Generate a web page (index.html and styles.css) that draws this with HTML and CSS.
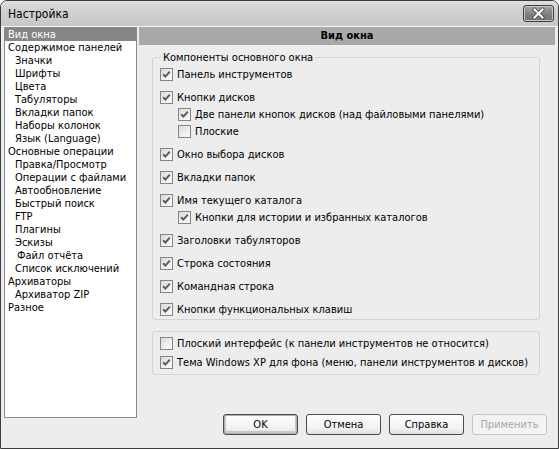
FILE: index.html
```html
<!DOCTYPE html>
<html lang="ru">
<head>
<meta charset="utf-8">
<title>Настройка</title>
<link rel="stylesheet" href="styles.css">
</head>
<body>
<div class="window">
  <div class="titlebar">
    <span class="title">Настройка</span>
    <span class="close">
      <svg width="29" height="15" viewBox="0 0 29 15"><path d="M10.5 3.5 L18.5 11.5 M18.5 3.5 L10.5 11.5" stroke="#4a4a4a" stroke-width="3.6" stroke-linecap="square"/><path d="M10.5 3.5 L18.5 11.5 M18.5 3.5 L10.5 11.5" stroke="#ffffff" stroke-width="2" stroke-linecap="square"/></svg>
    </span>
  </div>
  <div class="body">
    <ul class="tree">
      <li class="sel">Вид окна</li>
      <li>Содержимое панелей</li>
      <li class="l1">Значки</li>
      <li class="l1">Шрифты</li>
      <li class="l1">Цвета</li>
      <li class="l1">Табуляторы</li>
      <li class="l1">Вкладки папок</li>
      <li class="l1">Наборы колонок</li>
      <li class="l1">Язык (Language)</li>
      <li>Основные операции</li>
      <li class="l1">Правка/Просмотр</li>
      <li class="l1">Операции с файлами</li>
      <li class="l1">Автообновление</li>
      <li class="l1">Быстрый поиск</li>
      <li class="l1">FTP</li>
      <li class="l1">Плагины</li>
      <li class="l1">Эскизы</li>
      <li class="l1 extra">Файл отчёта</li>
      <li class="l1">Список исключений</li>
      <li>Архиваторы</li>
      <li class="l1">Архиватор ZIP</li>
      <li>Разное</li>
    </ul>
    <div class="main">
      <div class="header">Вид окна</div>
      <div class="group g1">
        <div class="legend">Компоненты основного окна</div>
        <div class="row first"><span class="cb on"><svg viewBox="0 0 11 11"><path d="M2.2 5.2 L4.4 7.6 L8.8 2.6" fill="none" stroke="#5c5c5c" stroke-width="2"/></svg></span>Панель инструментов</div>
        <div class="row"><span class="cb on"><svg viewBox="0 0 11 11"><path d="M2.2 5.2 L4.4 7.6 L8.8 2.6" fill="none" stroke="#5c5c5c" stroke-width="2"/></svg></span>Кнопки дисков</div>
        <div class="row sub"><span class="cb on"><svg viewBox="0 0 11 11"><path d="M2.2 5.2 L4.4 7.6 L8.8 2.6" fill="none" stroke="#5c5c5c" stroke-width="2"/></svg></span>Две панели кнопок дисков (над файловыми панелями)</div>
        <div class="row sub"><span class="cb"></span>Плоские</div>
        <div class="row"><span class="cb on"><svg viewBox="0 0 11 11"><path d="M2.2 5.2 L4.4 7.6 L8.8 2.6" fill="none" stroke="#5c5c5c" stroke-width="2"/></svg></span>Окно выбора дисков</div>
        <div class="row"><span class="cb on"><svg viewBox="0 0 11 11"><path d="M2.2 5.2 L4.4 7.6 L8.8 2.6" fill="none" stroke="#5c5c5c" stroke-width="2"/></svg></span>Вкладки папок</div>
        <div class="row"><span class="cb on"><svg viewBox="0 0 11 11"><path d="M2.2 5.2 L4.4 7.6 L8.8 2.6" fill="none" stroke="#5c5c5c" stroke-width="2"/></svg></span>Имя текущего каталога</div>
        <div class="row sub"><span class="cb on"><svg viewBox="0 0 11 11"><path d="M2.2 5.2 L4.4 7.6 L8.8 2.6" fill="none" stroke="#5c5c5c" stroke-width="2"/></svg></span>Кнопки для истории и избранных каталогов</div>
        <div class="row"><span class="cb on"><svg viewBox="0 0 11 11"><path d="M2.2 5.2 L4.4 7.6 L8.8 2.6" fill="none" stroke="#5c5c5c" stroke-width="2"/></svg></span>Заголовки табуляторов</div>
        <div class="row"><span class="cb on"><svg viewBox="0 0 11 11"><path d="M2.2 5.2 L4.4 7.6 L8.8 2.6" fill="none" stroke="#5c5c5c" stroke-width="2"/></svg></span>Строка состояния</div>
        <div class="row"><span class="cb on"><svg viewBox="0 0 11 11"><path d="M2.2 5.2 L4.4 7.6 L8.8 2.6" fill="none" stroke="#5c5c5c" stroke-width="2"/></svg></span>Командная строка</div>
        <div class="row"><span class="cb on"><svg viewBox="0 0 11 11"><path d="M2.2 5.2 L4.4 7.6 L8.8 2.6" fill="none" stroke="#5c5c5c" stroke-width="2"/></svg></span>Кнопки функциональных клавиш</div>
      </div>
      <div class="group g2">
        <div class="row first2"><span class="cb"></span>Плоский интерфейс (к панели инструментов не относится)</div>
        <div class="row second2"><span class="cb on"><svg viewBox="0 0 11 11"><path d="M2.2 5.2 L4.4 7.6 L8.8 2.6" fill="none" stroke="#5c5c5c" stroke-width="2"/></svg></span>Тема Windows XP для фона (меню, панели инструментов и дисков)</div>
      </div>
      <div class="buttons">
        <span class="btn default">OK</span>
        <span class="btn">Отмена</span>
        <span class="btn">Справка</span>
        <span class="btn disabled">Применить</span>
      </div>
    </div>
  </div>
</div>
</body>
</html>
```
FILE: styles.css
```css
* {
  box-sizing: border-box;
}

body {
  margin: 0;
  background: #ffffff;
  font-family: "DejaVu Sans Condensed", "Liberation Sans", sans-serif;
  font-size: 11px;
  color: #000000;
}

.window {
  width: 559px;
  height: 449px;
  border: 1px solid #3c3c3c;
  border-radius: 7px 7px 0 0;
  background: #ededed;
  display: flex;
  flex-direction: column;
  overflow: hidden;
}

.titlebar {
  height: 26px;
  flex: none;
  display: flex;
  align-items: center;
  padding: 0 4px 0 7px;
  background: linear-gradient(#dedede, #d0d0d0 40%, #c8c8c8);
  border-bottom: 1px solid #f6f6f6;
}

.title {
  font-size: 12px;
  line-height: 14px;
}

.close {
  margin-left: auto;
  width: 31px;
  height: 17px;
  border: 1px solid #3e3e3e;
  border-radius: 3px;
  background: linear-gradient(#a4a4a4, #7e7e7e 60%, #727272);
  box-shadow: inset 0 0 0 1px #c8c8c8;
  display: flex;
  align-items: center;
  justify-content: center;
}

.close svg {
  display: block;
}

.body {
  display: flex;
  align-items: flex-start;
  padding: 0 3px;
}

.tree {
  width: 133px;
  height: 391px;
  margin: 0;
  padding: 0;
  list-style: none;
  background: #ffffff;
  border: 1px solid #8a8a8a;
  flex: none;
}

.tree li {
  height: 13px;
  line-height: 13px;
  padding-left: 3px;
  white-space: nowrap;
}

.tree li.l1 {
  padding-left: 10px;
}

.tree li.extra {
  padding-left: 12px;
}

.tree li.sel {
  background: #868686;
  color: #ffffff;
}

.main {
  width: 416px;
  margin-left: 2px;
  display: flex;
  flex-direction: column;
  flex: none;
}

.header {
  height: 18px;
  line-height: 18px;
  background: #a9a9a9;
  font-weight: bold;
  text-align: center;
}

.group {
  margin: 12px 15px 0 13px;
  border: 1px solid #d3d3d3;
  border-radius: 3px;
  padding: 0 0 3px 7px;
}

.legend {
  margin: -7px 0 0 1px;
  padding: 0 2px;
  width: max-content;
  height: 13px;
  line-height: 13px;
  background: #ededed;
}

.row {
  display: flex;
  align-items: center;
  height: 13px;
  line-height: 13px;
  margin-top: 10px;
  white-space: nowrap;
}

.row.first {
  margin-top: 4px;
}

.row.sub {
  margin-top: 4px;
  margin-left: 18px;
}

.g2 {
  margin-top: 11px;
  padding-top: 5px;
  padding-bottom: 5px;
}

.row.first2 {
  margin-top: 0;
}

.row.second2 {
  margin-top: 6px;
}

.cb {
  width: 13px;
  height: 13px;
  flex: none;
  margin-right: 4px;
  border: 1px solid #858585;
  background: linear-gradient(135deg, #d9d9d9, #f0f0f0 60%, #fbfbfb);
  display: flex;
  align-items: center;
  justify-content: center;
}

.cb svg {
  width: 11px;
  height: 11px;
  display: block;
}

.buttons {
  display: flex;
  justify-content: flex-end;
  gap: 8px;
  margin: 39px 8px 0 0;
}

.btn {
  width: 75px;
  height: 21px;
  border: 1px solid #4a4a4a;
  border-radius: 3px;
  background: linear-gradient(#fefefe, #f2f2f2 70%, #dedede);
  display: flex;
  align-items: center;
  justify-content: center;
  line-height: 13px;
}

.btn.default {
  box-shadow: inset 0 0 0 1px #b2b2b2, inset 0 -1px 0 2px #c8c8c8;
}

.btn.disabled {
  border-color: #c4c4c4;
  background: #f3f3f3;
  color: #a8a8a8;
}
```
